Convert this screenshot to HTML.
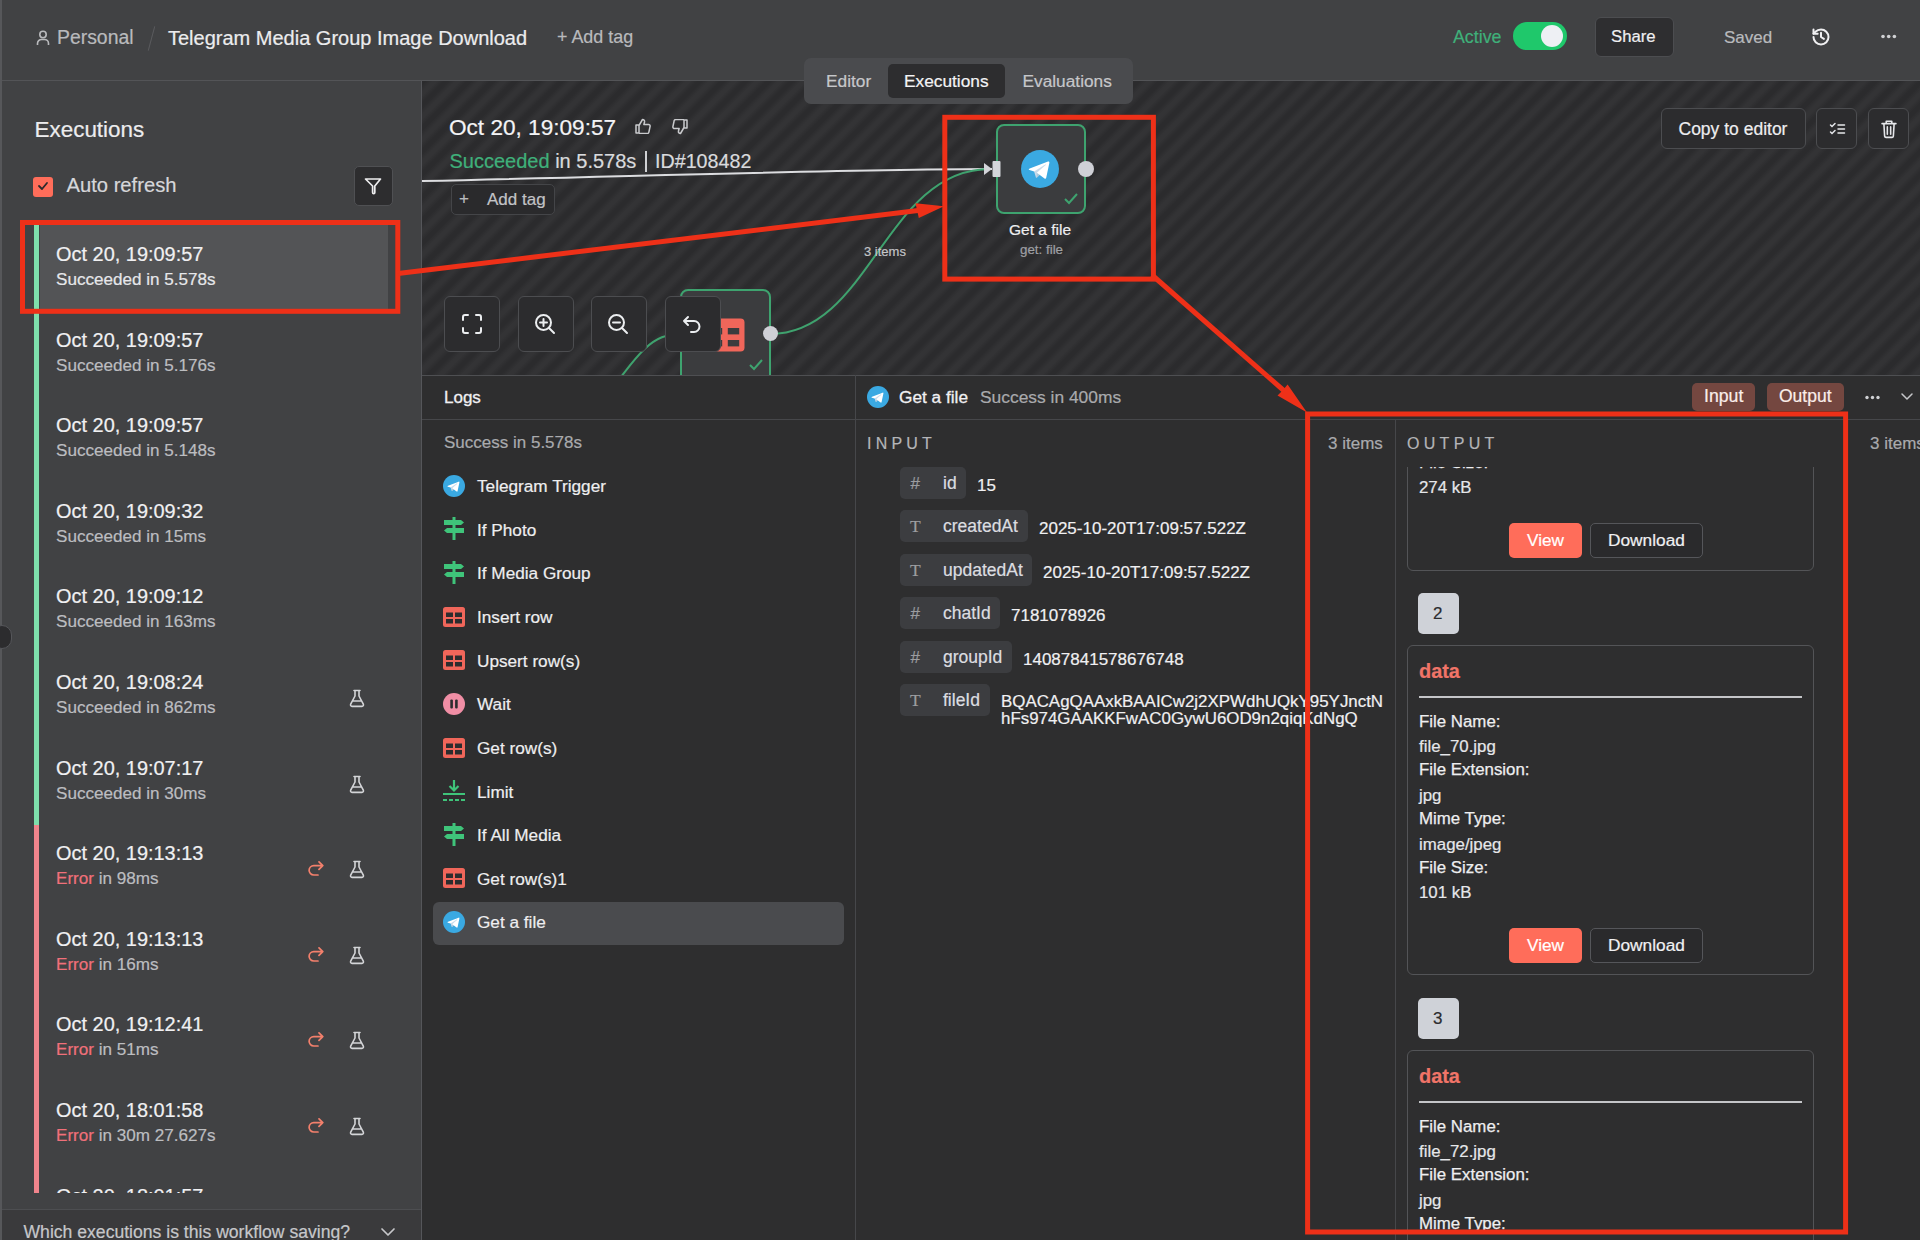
<!DOCTYPE html>
<html><head><meta charset="utf-8">
<style>
*{box-sizing:border-box;margin:0;padding:0}
html,body{width:1920px;height:1240px;overflow:hidden;background:#2c2c2e;font-family:"Liberation Sans",sans-serif;color:#e6e6e8}
.a{position:absolute;white-space:nowrap;line-height:1}
body *{-webkit-text-stroke-width:0.2px}
#hdr{position:absolute;left:0;top:0;width:1920px;height:81px;background:#414244;border-bottom:1px solid #535457}
#side{position:absolute;left:0;top:81px;width:422px;height:1159px;background:#414244;border-right:1px solid #55565a}
#canvas{position:absolute;left:422px;top:81px;width:1498px;height:294px;background-color:#2d2e30;overflow:hidden;
 background-image:repeating-linear-gradient(135deg,#2b2b2d 0px,#2b2b2d 2.5px,#333335 7.5px,#333335 10.5px,#2b2b2d 15.5px,#2b2b2d 16.3px)}
#logsbg{position:absolute;left:422px;top:375px;width:1498px;height:865px;background:#2e2e2f;border-top:1px solid #4e4f52}
.btn{position:absolute;border:1px solid #505155;border-radius:6px;background:#2c2c2e}
.gray{color:#b9babd}
#outclip{position:absolute;left:1396px;top:466.5px;width:524px;height:775px;overflow:hidden}
#outclip > *{margin-left:-1396px;margin-top:-466.5px}
.card{position:absolute;left:1407px;width:407px;border:1px solid #535457;border-radius:6px}
.lab{left:1419px;font-size:16.85px;color:#eeeef0;-webkit-text-stroke:0.25px #eeeef0}
.val{left:1419px;font-size:16.85px;color:#e6e7ea}
.zb{top:296px;width:56px;height:56px;background:#2c2c2e;border-color:#4c4d50;border-radius:6px}
#list{position:absolute;left:0;top:0;width:421px;height:1112px;overflow:hidden}
.row{position:absolute;left:0;width:421px;height:86px}
.row.sel::before{content:"";position:absolute;left:40px;top:0;width:348px;height:84px;background:#535456}
.row .d{position:absolute;left:56px;top:20.3px;font-size:19.95px;line-height:1;color:#f0f0f2;white-space:nowrap}
.row .s{position:absolute;left:56px;top:45.5px;font-size:17.1px;line-height:1;color:#bcbdc0;white-space:nowrap}
.row.sel .s{color:#e6e7ea}
.retry{position:absolute;left:308px;top:36px}
.flask{position:absolute;left:349px;top:36px}
</style></head><body>
<div id="hdr">
  <div style="position:absolute;left:0;top:0;width:2px;height:81px;background:#56575a"></div>
  <svg class="a" style="left:36px;top:30px" width="14" height="16" viewBox="0 0 14 16"><circle cx="7" cy="4.5" r="3.2" fill="none" stroke="#b9babd" stroke-width="1.6"/><path d="M1.5 15 v-1.5 a4 4 0 0 1 4 -4 h3 a4 4 0 0 1 4 4 v1.5" fill="none" stroke="#b9babd" stroke-width="1.6"/></svg>
  <div class="a gray" style="left:57px;top:28px;font-size:19.4px">Personal</div>
  <div class="a" style="left:151px;top:26px;width:1.2px;height:25px;background:#5a5b5e;transform:rotate(15deg)"></div>
  <div class="a" style="left:168px;top:28px;font-size:20px;color:#ececee">Telegram Media Group Image Download</div>
  <div class="a gray" style="left:557px;top:29px;font-size:17.9px">+ Add tag</div>
  <div class="a" style="left:1453px;top:29px;font-size:17.8px;color:#3fb07a">Active</div>
  <div class="a" style="left:1513px;top:22px;width:54px;height:28px;border-radius:14px;background:#1fc86b"></div>
  <div class="a" style="left:1541px;top:25px;width:22px;height:22px;border-radius:11px;background:#eef0f4"></div>
  <div class="btn" style="left:1595px;top:17px;width:79px;height:40px;background:#2e2e30;border-color:#4c4d50"></div>
  <div class="a" style="left:1611px;top:29px;font-size:16.7px;color:#f0f0f2">Share</div>
  <div class="a gray" style="left:1724px;top:29px;font-size:17px">Saved</div>
  <svg class="a" style="left:1810.5px;top:26.7px" width="20" height="20" viewBox="0 0 24 24"><path d="M3 12a9 9 0 1 0 9-9 9.75 9.75 0 0 0-6.74 2.74L3 8" fill="none" stroke="#f0f0f2" stroke-width="2.4" stroke-linecap="round" stroke-linejoin="round"/><path d="M3 3v5h5" fill="none" stroke="#f0f0f2" stroke-width="2.4" stroke-linecap="round" stroke-linejoin="round"/><path d="M12 7v5l3.5 2.2" fill="none" stroke="#f0f0f2" stroke-width="2.4" stroke-linecap="round" stroke-linejoin="round"/></svg>
  <svg class="a" style="left:1878px;top:32px" width="20" height="9" viewBox="0 0 20 9"><circle cx="5" cy="4.5" r="1.8" fill="#d0d1d4"/><circle cx="10.7" cy="4.5" r="1.8" fill="#d0d1d4"/><circle cx="16.4" cy="4.5" r="1.8" fill="#d0d1d4"/></svg>
</div>
<div id="side">
  <div class="a" style="left:34.5px;top:38px;font-size:22.45px;color:#ececee">Executions</div>
  <div class="a" style="left:33px;top:95.5px;width:20px;height:20px;border-radius:3px;background:#ff6d5a"></div>
  <svg class="a" style="left:37px;top:100px" width="12" height="10" viewBox="0 0 12 10"><path d="M2 5 l3 3 5 -6" fill="none" stroke="#2a2a2c" stroke-width="1.8" stroke-linecap="round" stroke-linejoin="round"/></svg>
  <div class="a" style="left:66.5px;top:94px;font-size:20.2px;color:#d6d7da">Auto refresh</div>
  <div class="btn" style="left:354px;top:84.5px;width:39px;height:40px;background:#2d2d2f;border-color:#4f5053;border-radius:5px"></div>
  <svg class="a" style="left:363px;top:95px" width="20" height="20" viewBox="0 0 20 20"><path d="M2.5 3 h15 l-5.7 7 v6.5 a1 1 0 0 1 -2.2 0 v-6.5 z" fill="none" stroke="#eeeef0" stroke-width="1.7" stroke-linejoin="round"/></svg>
  <div id="list">
  <div class="a" style="left:34px;top:144px;width:5.2px;height:600px;background:#7edfac"></div>
  <div class="a" style="left:34px;top:744px;width:5.2px;height:368px;background:#f0848c"></div>
<div class="row sel" style="top:144px">
  <div class="d">Oct 20, 19:09:57</div>
  <div class="s">Succeeded in 5.578s</div>
</div>
<div class="row" style="top:230px">
  <div class="d">Oct 20, 19:09:57</div>
  <div class="s">Succeeded in 5.176s</div>
</div>
<div class="row" style="top:315px">
  <div class="d">Oct 20, 19:09:57</div>
  <div class="s">Succeeded in 5.148s</div>
</div>
<div class="row" style="top:401px">
  <div class="d">Oct 20, 19:09:32</div>
  <div class="s">Succeeded in 15ms</div>
</div>
<div class="row" style="top:486px">
  <div class="d">Oct 20, 19:09:12</div>
  <div class="s">Succeeded in 163ms</div>
</div>
<div class="row" style="top:572px">
  <div class="d">Oct 20, 19:08:24</div>
  <div class="s">Succeeded in 862ms</div>
  <svg class="flask" width="16" height="19" viewBox="0 0 16 19"><path d="M5 1.5 h6 M6 1.5 v5.5 l-4.3 8.2 a1.5 1.5 0 0 0 1.3 2.2 h10 a1.5 1.5 0 0 0 1.3 -2.2 L10 7 v-5.5 M3.5 12 h9" fill="none" stroke="#d4d5d8" stroke-width="1.6" stroke-linecap="round" stroke-linejoin="round"/></svg>
</div>
<div class="row" style="top:658px">
  <div class="d">Oct 20, 19:07:17</div>
  <div class="s">Succeeded in 30ms</div>
  <svg class="flask" width="16" height="19" viewBox="0 0 16 19"><path d="M5 1.5 h6 M6 1.5 v5.5 l-4.3 8.2 a1.5 1.5 0 0 0 1.3 2.2 h10 a1.5 1.5 0 0 0 1.3 -2.2 L10 7 v-5.5 M3.5 12 h9" fill="none" stroke="#d4d5d8" stroke-width="1.6" stroke-linecap="round" stroke-linejoin="round"/></svg>
</div>
<div class="row" style="top:743px">
  <div class="d">Oct 20, 19:13:13</div>
  <div class="s"><span style="color:#f0707a">Error</span> in 98ms</div>
  <svg class="retry" width="16" height="16" viewBox="0 0 16 16"><path d="M10 15 H5.8 A4.7 4.7 0 0 1 5.8 5.6 H14.8 M11 1.8 L14.8 5.6 L11 9.4" fill="none" stroke="#f3806c" stroke-width="1.7" stroke-linecap="round" stroke-linejoin="round"/></svg>
  <svg class="flask" width="16" height="19" viewBox="0 0 16 19"><path d="M5 1.5 h6 M6 1.5 v5.5 l-4.3 8.2 a1.5 1.5 0 0 0 1.3 2.2 h10 a1.5 1.5 0 0 0 1.3 -2.2 L10 7 v-5.5 M3.5 12 h9" fill="none" stroke="#d4d5d8" stroke-width="1.6" stroke-linecap="round" stroke-linejoin="round"/></svg>
</div>
<div class="row" style="top:829px">
  <div class="d">Oct 20, 19:13:13</div>
  <div class="s"><span style="color:#f0707a">Error</span> in 16ms</div>
  <svg class="retry" width="16" height="16" viewBox="0 0 16 16"><path d="M10 15 H5.8 A4.7 4.7 0 0 1 5.8 5.6 H14.8 M11 1.8 L14.8 5.6 L11 9.4" fill="none" stroke="#f3806c" stroke-width="1.7" stroke-linecap="round" stroke-linejoin="round"/></svg>
  <svg class="flask" width="16" height="19" viewBox="0 0 16 19"><path d="M5 1.5 h6 M6 1.5 v5.5 l-4.3 8.2 a1.5 1.5 0 0 0 1.3 2.2 h10 a1.5 1.5 0 0 0 1.3 -2.2 L10 7 v-5.5 M3.5 12 h9" fill="none" stroke="#d4d5d8" stroke-width="1.6" stroke-linecap="round" stroke-linejoin="round"/></svg>
</div>
<div class="row" style="top:914px">
  <div class="d">Oct 20, 19:12:41</div>
  <div class="s"><span style="color:#f0707a">Error</span> in 51ms</div>
  <svg class="retry" width="16" height="16" viewBox="0 0 16 16"><path d="M10 15 H5.8 A4.7 4.7 0 0 1 5.8 5.6 H14.8 M11 1.8 L14.8 5.6 L11 9.4" fill="none" stroke="#f3806c" stroke-width="1.7" stroke-linecap="round" stroke-linejoin="round"/></svg>
  <svg class="flask" width="16" height="19" viewBox="0 0 16 19"><path d="M5 1.5 h6 M6 1.5 v5.5 l-4.3 8.2 a1.5 1.5 0 0 0 1.3 2.2 h10 a1.5 1.5 0 0 0 1.3 -2.2 L10 7 v-5.5 M3.5 12 h9" fill="none" stroke="#d4d5d8" stroke-width="1.6" stroke-linecap="round" stroke-linejoin="round"/></svg>
</div>
<div class="row" style="top:1000px">
  <div class="d">Oct 20, 18:01:58</div>
  <div class="s"><span style="color:#f0707a">Error</span> in 30m 27.627s</div>
  <svg class="retry" width="16" height="16" viewBox="0 0 16 16"><path d="M10 15 H5.8 A4.7 4.7 0 0 1 5.8 5.6 H14.8 M11 1.8 L14.8 5.6 L11 9.4" fill="none" stroke="#f3806c" stroke-width="1.7" stroke-linecap="round" stroke-linejoin="round"/></svg>
  <svg class="flask" width="16" height="19" viewBox="0 0 16 19"><path d="M5 1.5 h6 M6 1.5 v5.5 l-4.3 8.2 a1.5 1.5 0 0 0 1.3 2.2 h10 a1.5 1.5 0 0 0 1.3 -2.2 L10 7 v-5.5 M3.5 12 h9" fill="none" stroke="#d4d5d8" stroke-width="1.6" stroke-linecap="round" stroke-linejoin="round"/></svg>
</div>
<div class="row" style="top:1086px">
  <div class="d">Oct 20, 18:01:57</div>
  <div class="s"></div>
</div>
  </div>
  <div class="a" style="left:0;top:1128px;width:421px;height:31px;background:#3a3a3c;border-top:1px solid #4d4e51"></div>
  <div class="a" style="left:23.5px;top:1143px;font-size:17.6px;color:#c6c7ca">Which executions is this workflow saving?</div>
  <svg class="a" style="left:380px;top:1146px" width="16" height="10" viewBox="0 0 16 10"><path d="M2 2 l6 6 6 -6" fill="none" stroke="#c6c7ca" stroke-width="1.7" stroke-linecap="round" stroke-linejoin="round"/></svg>
  <div class="a" style="left:0;top:0;width:1.5px;height:1159px;background:#56575a"></div>
  <div class="a" style="left:-8px;top:544px;width:20px;height:24px;border-radius:12px;background:#2c2c2e;border:1px solid #55565a"></div>
</div>
<div id="canvas"><div style="position:absolute;left:-422px;top:-81px;width:1920px;height:1240px">
  <svg class="a" style="left:0;top:0" width="1920" height="400" viewBox="0 0 1920 400">
    <path d="M380 182 C 650 176, 850 169, 992 169" fill="none" stroke="#dcdde0" stroke-width="2"/>
    <path d="M770 334 C 870 334, 885 169, 990 169" fill="none" stroke="#3fa26e" stroke-width="2"/>
    <path d="M590 420 C 640 350, 650 334, 682 334" fill="none" stroke="#3fa26e" stroke-width="2"/>
  </svg>
  <!-- node get a file -->
  <div class="a" style="left:996px;top:124px;width:90px;height:90px;border:2px solid #3ea36f;border-radius:8px;background:#3b3c3e"></div>
  <svg class="a" style="left:1021px;top:150px" width="38" height="38" viewBox="0 0 240 240"><circle cx="120" cy="120" r="120" fill="#3aa9e2"/><path fill="#c8daea" d="M98 175c-3.888 0-3.227-1.468-4.568-5.17L82 132.207 170 80"/><path fill="#a9c9dd" d="M98 175c3 0 4.325-1.372 6-3l16-15.558-19.958-12.035"/><path fill="#fff" d="M100.04 144.41l48.36 35.729c5.519 3.045 9.501 1.468 10.876-5.123l19.685-92.763c2.015-8.08-3.08-11.746-8.36-9.349l-115.59 44.571c-7.89 3.165-7.843 7.567-1.438 9.528l29.663 9.259 68.673-43.325c3.242-1.966 6.218-.91 3.776 1.258"/></svg>
  <div class="a" style="left:1078px;top:161px;width:16px;height:16px;border-radius:8px;background:#cfd0d6"></div>
  <svg class="a" style="left:980px;top:160px" width="22" height="18" viewBox="980 160 22 18"><path d="M984 163 l8 6 -8 6 z" fill="#d4d5da"/><rect x="992.5" y="161" width="8" height="16" rx="1" fill="#d4d5da"/></svg>
  <svg class="a" style="left:1063px;top:192px" width="16" height="14" viewBox="0 0 16 14"><path d="M2 7 l4 4 8 -9" fill="none" stroke="#3ea36f" stroke-width="2"/></svg>
  <div class="a" style="left:1009px;top:222px;font-size:15.5px;color:#eeeef0">Get a file</div>
  <div class="a" style="left:1020px;top:243px;font-size:13.35px;color:#9fa0a4">get: file</div>
  <div class="a" style="left:864px;top:245px;font-size:13px;color:#c4c5c8">3 items</div>
  <!-- node 2 -->
  <div class="a" style="left:680px;top:289px;width:91px;height:110px;border:2px solid #3ea36f;border-radius:8px;background:#3b3c3e"></div>
  <svg class="a" style="left:705px;top:314px" width="40" height="40" viewBox="0 0 40 40"><rect x="1" y="4.4" width="38.5" height="33.2" rx="4" fill="#f0665a"/><rect x="5.8" y="14" width="11.4" height="6.4" fill="#3b3c3e"/><rect x="22.8" y="14" width="11.4" height="6.4" fill="#3b3c3e"/><rect x="5.8" y="26" width="11.4" height="6.4" fill="#3b3c3e"/><rect x="22.8" y="26" width="11.4" height="6.4" fill="#3b3c3e"/></svg>
  <div class="a" style="left:763px;top:326px;width:15px;height:15px;border-radius:8px;background:#cfd0d6"></div>
  <svg class="a" style="left:747.5px;top:358px" width="16" height="14" viewBox="0 0 16 14"><path d="M2 7 l4 4 8 -9" fill="none" stroke="#3ea36f" stroke-width="2"/></svg>
  <!-- zoom buttons -->
  <div class="btn zb" style="left:444px"></div>
  <div class="btn zb" style="left:518px"></div>
  <div class="btn zb" style="left:591px"></div>
  <div class="btn zb" style="left:665px"></div>
  <svg class="a" style="left:461px;top:313px" width="22" height="22" viewBox="0 0 22 22"><path d="M2 7 V4 a2 2 0 0 1 2 -2 H7 M15 2 h3 a2 2 0 0 1 2 2 v3 M20 15 v3 a2 2 0 0 1 -2 2 h-3 M7 20 H4 a2 2 0 0 1 -2 -2 v-3" fill="none" stroke="#eceef0" stroke-width="2" stroke-linecap="round"/></svg>
  <svg class="a" style="left:534px;top:313px" width="22" height="22" viewBox="0 0 22 22"><circle cx="9.5" cy="9.5" r="7.5" fill="none" stroke="#eceef0" stroke-width="2"/><path d="M15 15 l5 5 M9.5 6 v7 M6 9.5 h7" stroke="#eceef0" stroke-width="2" stroke-linecap="round"/></svg>
  <svg class="a" style="left:607px;top:313px" width="22" height="22" viewBox="0 0 22 22"><circle cx="9.5" cy="9.5" r="7.5" fill="none" stroke="#eceef0" stroke-width="2"/><path d="M15 15 l5 5 M6 9.5 h7" stroke="#eceef0" stroke-width="2" stroke-linecap="round"/></svg>
  <svg class="a" style="left:681px;top:313px" width="22" height="22" viewBox="0 0 22 22"><path d="M7 4 L3 8 l4 4 M3 8 h10 a5.5 5.5 0 0 1 0 11 h-3" fill="none" stroke="#eceef0" stroke-width="2" stroke-linecap="round" stroke-linejoin="round"/></svg>
  <!-- exec header -->
  <div class="a" style="left:449px;top:116.5px;font-size:22.6px;color:#f4f4f6">Oct 20, 19:09:57</div>
  <svg class="a" style="left:635px;top:118px" width="17" height="16" viewBox="0 0 17 16"><path d="M1 7 h3 v8 h-3 z M4 7.5 l3.5 -6 c1.5 0 2.3 1 2 2.5 l-0.6 2.5 h4.6 a1.6 1.6 0 0 1 1.6 1.9 l-1.2 5.6 a1.8 1.8 0 0 1 -1.8 1.5 h-8.1" fill="none" stroke="#c9cacd" stroke-width="1.5" stroke-linejoin="round"/></svg>
  <svg class="a" style="left:671px;top:119px" width="17" height="16" viewBox="0 0 17 16"><path d="M16 9 h-3 v-8 h3 z M13 8.5 l-3.5 6 c-1.5 0 -2.3 -1 -2 -2.5 l0.6 -2.5 h-4.6 a1.6 1.6 0 0 1 -1.6 -1.9 l1.2 -5.6 a1.8 1.8 0 0 1 1.8 -1.5 h8.1" fill="none" stroke="#c9cacd" stroke-width="1.5" stroke-linejoin="round"/></svg>
  <div class="a" style="left:449.5px;top:151.3px;font-size:20px;color:#d9dadd"><span style="color:#3fb07a">Succeeded</span> in 5.578s</div>
  <div class="a" style="left:645px;top:150.5px;width:2px;height:21px;background:#d0d1d4"></div>
  <div class="a" style="left:655px;top:151.5px;font-size:19.7px;color:#d9dadd">ID#108482</div>
  <div class="btn" style="left:451px;top:184px;width:104px;height:31px;background:#2a2a2c;border-color:#444548;border-radius:5px"></div>
  <div class="a" style="left:459px;top:190px;font-size:17px;color:#b9babd">+</div>
  <div class="a" style="left:487px;top:191px;font-size:17px;color:#c2c3c6">Add tag</div>
  <!-- right buttons -->
  <div class="btn" style="left:1661px;top:108px;width:145px;height:41px;background:#2c2c2e;border-color:#4c4d50"></div>
  <div class="a" style="left:1678.5px;top:121px;font-size:17.5px;color:#eeeef0">Copy to editor</div>
  <div class="btn" style="left:1816px;top:108px;width:41px;height:41px;background:#2c2c2e;border-color:#4c4d50"></div>
  <svg class="a" style="left:1829px;top:121px" width="17" height="17" viewBox="0 0 17 17"><path d="M1.5 4 l1.5 1.5 3 -3 M1.5 11 l1.5 1.5 3 -3 M9 4 h6.5 M9 8 h6.5 M9 12 h6.5" fill="none" stroke="#e6e7ea" stroke-width="1.5" stroke-linecap="round"/></svg>
  <div class="btn" style="left:1868px;top:108px;width:41px;height:41px;background:#2c2c2e;border-color:#4c4d50"></div>
  <svg class="a" style="left:1879.5px;top:119px" width="18" height="19.5" viewBox="0 0 19 21"><path d="M2 5 h15 M6.5 5 V2.5 h6 V5 M4 5 l0.8 13.5 a1.5 1.5 0 0 0 1.5 1.3 h6.4 a1.5 1.5 0 0 0 1.5 -1.3 L15 5 M7.7 8.5 v8 M11.3 8.5 v8" fill="none" stroke="#e6e7ea" stroke-width="1.7" stroke-linecap="round" stroke-linejoin="round"/></svg>
</div></div>
<div class="a" style="left:804px;top:58px;width:329px;height:46px;border-radius:7px;background:#4a4b4e"></div>
<div class="a" style="left:888px;top:64px;width:117px;height:34px;border-radius:5px;background:#2d2d2f"></div>
<div class="a" style="left:826px;top:72.5px;font-size:17.3px;color:#c6c7ca">Editor</div>
<div class="a" style="left:904px;top:72.5px;font-size:17.3px;color:#f4f4f6">Executions</div>
<div class="a" style="left:1022.5px;top:72.5px;font-size:17.3px;color:#c6c7ca">Evaluations</div>
<div id="logsbg"></div><div id="logs">
<div class="a" style="left:433px;top:902px;width:411px;height:43px;border-radius:6px;background:#4a4b4e"></div>
<div class="a" style="left:855px;top:375px;width:1px;height:865px;background:#46474a"></div>
<div class="a" style="left:422px;top:419px;width:1498px;height:1px;background:#46474a"></div>
<div class="a" style="left:444px;top:389px;font-size:17px;color:#f0f0f2;-webkit-text-stroke:0.3px #f0f0f2">Logs</div>
<div class="a" style="left:444px;top:433.5px;font-size:17px;color:#a9aaad">Success in 5.578s</div>
<svg class="a" style="left:443px;top:475px" width="22" height="22" viewBox="0 0 240 240"><circle cx="120" cy="120" r="120" fill="#3aa9e2"/><path fill="#c8daea" d="M98 175c-3.888 0-3.227-1.468-4.568-5.17L82 132.207 170 80"/><path fill="#a9c9dd" d="M98 175c3 0 4.325-1.372 6-3l16-15.558-19.958-12.035"/><path fill="#fff" d="M100.04 144.41l48.36 35.729c5.519 3.045 9.501 1.468 10.876-5.123l19.685-92.763c2.015-8.08-3.08-11.746-8.36-9.349l-115.59 44.571c-7.89 3.165-7.843 7.567-1.438 9.528l29.663 9.259 68.673-43.325c3.242-1.966 6.218-.91 3.776 1.258"/></svg>
<div class="a" style="left:477px;top:478px;font-size:17.2px;color:#eeeef0">Telegram Trigger</div>
<svg class="a" style="left:443px;top:517px" width="22" height="24" viewBox="0 0 22 24"><path d="M1 3 h17 l3 2.5 -3 2.5 h-17 z M21 11 h-17 l-3 2.5 3 2.5 h17 z" fill="#3fc47a"/><rect x="9.5" y="0" width="3" height="3" fill="#3fc47a"/><rect x="9.5" y="8" width="3" height="3" fill="#3fc47a"/><rect x="9.5" y="16" width="3" height="7" fill="#3fc47a"/></svg>
<div class="a" style="left:477px;top:521.5px;font-size:17.2px;color:#eeeef0">If Photo</div>
<svg class="a" style="left:443px;top:561px" width="22" height="24" viewBox="0 0 22 24"><path d="M1 3 h17 l3 2.5 -3 2.5 h-17 z M21 11 h-17 l-3 2.5 3 2.5 h17 z" fill="#3fc47a"/><rect x="9.5" y="0" width="3" height="3" fill="#3fc47a"/><rect x="9.5" y="8" width="3" height="3" fill="#3fc47a"/><rect x="9.5" y="16" width="3" height="7" fill="#3fc47a"/></svg>
<div class="a" style="left:477px;top:565px;font-size:17.2px;color:#eeeef0">If Media Group</div>
<svg class="a" style="left:443px;top:607px" width="22" height="20" viewBox="0 0 22 20"><rect x="0" y="0" width="22" height="20" rx="2.5" fill="#f0665a"/><rect x="3" y="5.5" width="7" height="4.5" fill="#2c2c2e"/><rect x="12" y="5.5" width="7" height="4.5" fill="#2c2c2e"/><rect x="3" y="12" width="7" height="4.5" fill="#2c2c2e"/><rect x="12" y="12" width="7" height="4.5" fill="#2c2c2e"/></svg>
<div class="a" style="left:477px;top:609px;font-size:17.2px;color:#eeeef0">Insert row</div>
<svg class="a" style="left:443px;top:650px" width="22" height="20" viewBox="0 0 22 20"><rect x="0" y="0" width="22" height="20" rx="2.5" fill="#f0665a"/><rect x="3" y="5.5" width="7" height="4.5" fill="#2c2c2e"/><rect x="12" y="5.5" width="7" height="4.5" fill="#2c2c2e"/><rect x="3" y="12" width="7" height="4.5" fill="#2c2c2e"/><rect x="12" y="12" width="7" height="4.5" fill="#2c2c2e"/></svg>
<div class="a" style="left:477px;top:652.5px;font-size:17.2px;color:#eeeef0">Upsert row(s)</div>
<svg class="a" style="left:443px;top:693px" width="22" height="22" viewBox="0 0 22 22"><circle cx="11" cy="11" r="11" fill="#f08ea5"/><rect x="7.3" y="6.5" width="2.6" height="9" rx="1" fill="#2c2c2e"/><rect x="12.1" y="6.5" width="2.6" height="9" rx="1" fill="#2c2c2e"/></svg>
<div class="a" style="left:477px;top:696px;font-size:17.2px;color:#eeeef0">Wait</div>
<svg class="a" style="left:443px;top:738px" width="22" height="20" viewBox="0 0 22 20"><rect x="0" y="0" width="22" height="20" rx="2.5" fill="#f0665a"/><rect x="3" y="5.5" width="7" height="4.5" fill="#2c2c2e"/><rect x="12" y="5.5" width="7" height="4.5" fill="#2c2c2e"/><rect x="3" y="12" width="7" height="4.5" fill="#2c2c2e"/><rect x="12" y="12" width="7" height="4.5" fill="#2c2c2e"/></svg>
<div class="a" style="left:477px;top:740px;font-size:17.2px;color:#eeeef0">Get row(s)</div>
<svg class="a" style="left:443px;top:779px" width="22" height="24" viewBox="0 0 22 24"><path d="M11 1 v10 M6.5 7 l4.5 4.5 4.5 -4.5" fill="none" stroke="#3fc47a" stroke-width="2.2"/><path d="M0 15 h22" stroke="#3fc47a" stroke-width="2"/><path d="M0 21 h22" stroke="#3fc47a" stroke-width="2" stroke-dasharray="4 2"/></svg>
<div class="a" style="left:477px;top:783.5px;font-size:17.2px;color:#eeeef0">Limit</div>
<svg class="a" style="left:443px;top:823px" width="22" height="24" viewBox="0 0 22 24"><path d="M1 3 h17 l3 2.5 -3 2.5 h-17 z M21 11 h-17 l-3 2.5 3 2.5 h17 z" fill="#3fc47a"/><rect x="9.5" y="0" width="3" height="3" fill="#3fc47a"/><rect x="9.5" y="8" width="3" height="3" fill="#3fc47a"/><rect x="9.5" y="16" width="3" height="7" fill="#3fc47a"/></svg>
<div class="a" style="left:477px;top:827px;font-size:17.2px;color:#eeeef0">If All Media</div>
<svg class="a" style="left:443px;top:868px" width="22" height="20" viewBox="0 0 22 20"><rect x="0" y="0" width="22" height="20" rx="2.5" fill="#f0665a"/><rect x="3" y="5.5" width="7" height="4.5" fill="#2c2c2e"/><rect x="12" y="5.5" width="7" height="4.5" fill="#2c2c2e"/><rect x="3" y="12" width="7" height="4.5" fill="#2c2c2e"/><rect x="12" y="12" width="7" height="4.5" fill="#2c2c2e"/></svg>
<div class="a" style="left:477px;top:870.5px;font-size:17.2px;color:#eeeef0">Get row(s)1</div>
<svg class="a" style="left:443px;top:911px" width="22" height="22" viewBox="0 0 240 240"><circle cx="120" cy="120" r="120" fill="#3aa9e2"/><path fill="#c8daea" d="M98 175c-3.888 0-3.227-1.468-4.568-5.17L82 132.207 170 80"/><path fill="#a9c9dd" d="M98 175c3 0 4.325-1.372 6-3l16-15.558-19.958-12.035"/><path fill="#fff" d="M100.04 144.41l48.36 35.729c5.519 3.045 9.501 1.468 10.876-5.123l19.685-92.763c2.015-8.08-3.08-11.746-8.36-9.349l-115.59 44.571c-7.89 3.165-7.843 7.567-1.438 9.528l29.663 9.259 68.673-43.325c3.242-1.966 6.218-.91 3.776 1.258"/></svg>
<div class="a" style="left:477px;top:914px;font-size:17.2px;color:#eeeef0">Get a file</div>
</div>
<div id="detail">
<svg class="a" style="left:867px;top:386px" width="22" height="22" viewBox="0 0 240 240"><circle cx="120" cy="120" r="120" fill="#3aa9e2"/><path fill="#c8daea" d="M98 175c-3.888 0-3.227-1.468-4.568-5.17L82 132.207 170 80"/><path fill="#a9c9dd" d="M98 175c3 0 4.325-1.372 6-3l16-15.558-19.958-12.035"/><path fill="#fff" d="M100.04 144.41l48.36 35.729c5.519 3.045 9.501 1.468 10.876-5.123l19.685-92.763c2.015-8.08-3.08-11.746-8.36-9.349l-115.59 44.571c-7.89 3.165-7.843 7.567-1.438 9.528l29.663 9.259 68.673-43.325c3.242-1.966 6.218-.91 3.776 1.258"/></svg>
<div class="a" style="left:899px;top:389px;font-size:17.25px;color:#f0f0f2;-webkit-text-stroke:0.3px #f0f0f2">Get a file</div>
<div class="a" style="left:980px;top:389px;font-size:17.4px;color:#a9aaad">Success in 400ms</div>
<div class="a" style="left:1692px;top:383px;width:63px;height:28px;border-radius:5px;background:#744740"></div>
<div class="a" style="left:1767px;top:383px;width:77px;height:28px;border-radius:5px;background:#744740"></div>
<div class="a" style="left:1704px;top:388px;font-size:17.7px;color:#fbeeea">Input</div>
<div class="a" style="left:1779px;top:388px;font-size:17.5px;color:#fbeeea">Output</div>
<svg class="a" style="left:1862px;top:392.5px" width="20" height="9" viewBox="0 0 20 9"><circle cx="5" cy="4.5" r="1.7" fill="#d0d1d4"/><circle cx="10.5" cy="4.5" r="1.7" fill="#d0d1d4"/><circle cx="16" cy="4.5" r="1.7" fill="#d0d1d4"/></svg>
<svg class="a" style="left:1900px;top:392px" width="14" height="9" viewBox="0 0 14 9"><path d="M2 2 l5 5 5 -5" fill="none" stroke="#c6c7ca" stroke-width="1.5" stroke-linecap="round" stroke-linejoin="round"/></svg>
<div class="a" style="left:867px;top:436px;font-size:16px;letter-spacing:4.2px;color:#b4b5b8">INPUT</div>
<div class="a" style="left:1328px;top:435px;font-size:17px;color:#a9aaad">3 items</div>
<div class="a" style="left:1395px;top:420px;width:1px;height:820px;background:#46474a"></div>
<div class="a" style="left:900px;top:467px;width:66px;height:32px;border-radius:5px;background:#3c3d40"></div>
<div class="a" style="left:910.5px;top:475px;font-size:17px;color:#9c9da0">#</div>
<div class="a" style="left:943px;top:474.5px;font-size:17.5px;color:#dcdde0">id</div>
<div class="a" style="left:977px;top:476.5px;font-size:17px;color:#f0f0f2">15</div>
<div class="a" style="left:900px;top:510px;width:128px;height:32px;border-radius:5px;background:#3c3d40"></div>
<div class="a" style="left:910px;top:518px;font-size:17.5px;font-family:'Liberation Serif',serif;color:#9c9da0">T</div>
<div class="a" style="left:943px;top:517.5px;font-size:17.5px;color:#dcdde0">createdAt</div>
<div class="a" style="left:1039px;top:519.5px;font-size:17px;color:#f0f0f2">2025-10-20T17:09:57.522Z</div>
<div class="a" style="left:900px;top:554px;width:132px;height:32px;border-radius:5px;background:#3c3d40"></div>
<div class="a" style="left:910px;top:562px;font-size:17.5px;font-family:'Liberation Serif',serif;color:#9c9da0">T</div>
<div class="a" style="left:943px;top:561.5px;font-size:17.5px;color:#dcdde0">updatedAt</div>
<div class="a" style="left:1043px;top:563.5px;font-size:17px;color:#f0f0f2">2025-10-20T17:09:57.522Z</div>
<div class="a" style="left:900px;top:597px;width:100px;height:32px;border-radius:5px;background:#3c3d40"></div>
<div class="a" style="left:910.5px;top:605px;font-size:17px;color:#9c9da0">#</div>
<div class="a" style="left:943px;top:604.5px;font-size:17.5px;color:#dcdde0">chatId</div>
<div class="a" style="left:1011px;top:606.5px;font-size:17px;color:#f0f0f2">7181078926</div>
<div class="a" style="left:900px;top:641px;width:112px;height:32px;border-radius:5px;background:#3c3d40"></div>
<div class="a" style="left:910.5px;top:649px;font-size:17px;color:#9c9da0">#</div>
<div class="a" style="left:943px;top:648.5px;font-size:17.5px;color:#dcdde0">groupId</div>
<div class="a" style="left:1023px;top:650.5px;font-size:17px;color:#f0f0f2">14087841578676748</div>
<div class="a" style="left:900px;top:684px;width:90px;height:32px;border-radius:5px;background:#3c3d40"></div>
<div class="a" style="left:910px;top:692px;font-size:17.5px;font-family:'Liberation Serif',serif;color:#9c9da0">T</div>
<div class="a" style="left:943px;top:691.5px;font-size:17.5px;color:#dcdde0">fileId</div>
<div class="a" style="left:1001px;top:694px;font-size:16.9px;line-height:16.6px;color:#f0f0f2">BQACAgQAAxkBAAICw2j2XPWdhUQkY95YJnctN<br>hFs974GAAKKFwAC0GywU6OD9n2qiqKdNgQ</div>
<div class="a" style="left:1407px;top:436px;font-size:16px;letter-spacing:4.3px;color:#b4b5b8">OUTPUT</div>
<div class="a" style="left:1870px;top:435px;font-size:17px;color:#a9aaad">3 items</div>
<div id="outclip">
<div class="card" style="top:430px;height:141px"></div>
<div class="a lab" style="top:454.5px">File Size:</div>
<div class="a val" style="top:479.5px">274 kB</div>
<div class="a" style="left:1509px;top:523px;width:73px;height:35px;border-radius:5px;background:#ff6d5a"></div>
<div class="a" style="left:1527px;top:532px;font-size:17.2px;color:#fff">View</div>
<div class="a" style="left:1590px;top:523px;width:113px;height:35px;border-radius:5px;background:#2a2a2c;border:1px solid #55565a"></div>
<div class="a" style="left:1608px;top:532px;font-size:17.3px;color:#f0f0f2">Download</div>
<div class="a" style="left:1418px;top:593px;width:41px;height:41px;border-radius:5px;background:#cfd2d8"></div>
<div class="a" style="left:1433px;top:605px;font-size:17px;color:#2a2b2e">2</div>
<div class="card" style="top:645px;height:330px"></div>
<div class="a" style="left:1419px;top:662px;font-size:19.9px;font-weight:700;color:#f07468">data</div>
<div class="a" style="left:1419px;top:696px;width:383px;height:2px;background:#c4c5c8"></div>
<div class="a lab" style="top:713.5px">File Name:</div>
<div class="a val" style="top:738.9px">file_70.jpg</div>
<div class="a lab" style="top:762.3px">File Extension:</div>
<div class="a val" style="top:787.7px">jpg</div>
<div class="a lab" style="top:811.1px">Mime Type:</div>
<div class="a val" style="top:836.5px">image/jpeg</div>
<div class="a lab" style="top:859.9px">File Size:</div>
<div class="a val" style="top:885.3px">101 kB</div>
<div class="a" style="left:1509px;top:928px;width:73px;height:35px;border-radius:5px;background:#ff6d5a"></div>
<div class="a" style="left:1527px;top:937px;font-size:17.2px;color:#fff">View</div>
<div class="a" style="left:1590px;top:928px;width:113px;height:35px;border-radius:5px;background:#2a2a2c;border:1px solid #55565a"></div>
<div class="a" style="left:1608px;top:937px;font-size:17.3px;color:#f0f0f2">Download</div>
<div class="a" style="left:1418px;top:998px;width:41px;height:41px;border-radius:5px;background:#cfd2d8"></div>
<div class="a" style="left:1433px;top:1010px;font-size:17px;color:#2a2b2e">3</div>
<div class="card" style="top:1050px;height:400px"></div>
<div class="a" style="left:1419px;top:1067px;font-size:19.9px;font-weight:700;color:#f07468">data</div>
<div class="a" style="left:1419px;top:1101px;width:383px;height:2px;background:#c4c5c8"></div>
<div class="a lab" style="top:1118.5px">File Name:</div>
<div class="a val" style="top:1143.9px">file_72.jpg</div>
<div class="a lab" style="top:1167.3px">File Extension:</div>
<div class="a val" style="top:1192.7px">jpg</div>
<div class="a lab" style="top:1216.1px">Mime Type:</div>
<div class="a val" style="top:1241.5px">image/jpeg</div>
<div class="a lab" style="top:1264.9px">File Size:</div>
<div class="a val" style="top:1290.3px">101 kB</div>
</div>
</div>
<svg class="a" style="left:0;top:0;pointer-events:none" width="1920" height="1240" viewBox="0 0 1920 1240">
 <g fill="none" stroke="#ee3018" stroke-width="5">
  <rect x="22.5" y="222.5" width="375.3" height="88.8"/>
  <rect x="944.8" y="117.3" width="208.6" height="161.8"/>
  <rect x="1307.6" y="414" width="538" height="818"/>
  <path d="M398 273.5 L918 210.5"/>
  <path d="M1152 275 L1290 396"/>
 </g>
 <g fill="#ee3018">
  <path d="M944 206.3 L915.5 203.2 L917.2 210.8 L918.8 218 z"/>
  <path d="M1307 412.5 L1287.6 384.5 L1283 390 L1277.5 395.5 z"/>
 </g>
</svg>
</body></html>
